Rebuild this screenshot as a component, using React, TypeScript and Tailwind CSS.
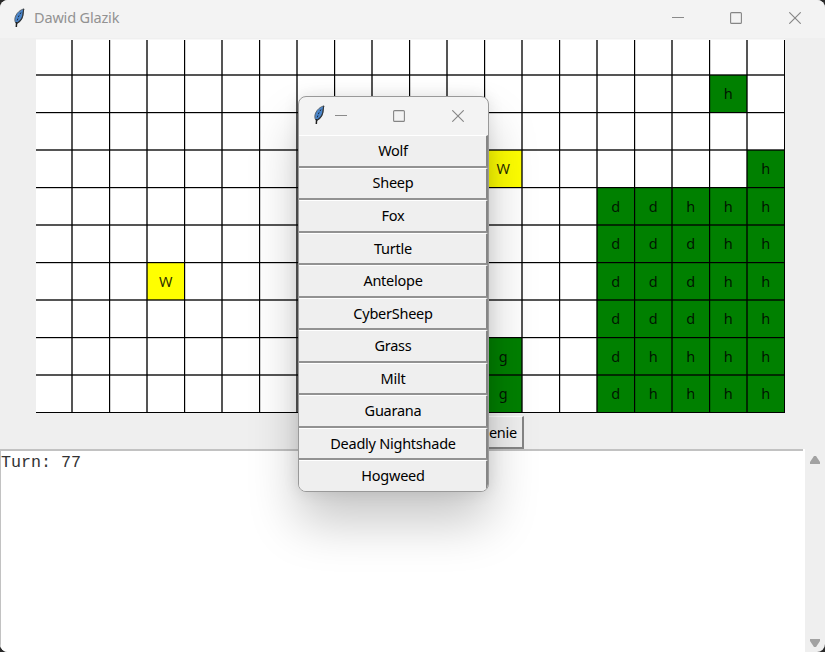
import React from "react";

const organisms: Record<string, string> = {
  "1,18": "h", "3,12": "W", "3,19": "h", "6,3": "W", "8,12": "g", "9,12": "g",
};
["ddhhh", "dddhh", "dddhh", "dddhh", "dhhhh", "dhhhh"].forEach((row, r) =>
  row.split("").forEach((c, i) => { organisms[`${r + 4},${i + 15}`] = c; })
);

const species = ["Wolf", "Sheep", "Fox", "Turtle", "Antelope", "CyberSheep", "Grass", "Milt", "Guarana", "Deadly Nightshade", "Hogweed"];

function Feather({ className }: { className: string }) {
  return (
    <svg className={className} width="12" height="20" viewBox="0 0 12 20">
      <path d="M10.8.9C7.5 1.6 4.2 4.4 2.6 8c-1.1 2.8-1 5 .1 7L3.8 15.4C6.8 13.6 8.9 11.2 9.7 8c.7-2.6.3-4.4 1.1-7.1Z" fill="#4a86cc" stroke="#555c63" strokeWidth=".9" />
      <path d="M10.8.9C10 3.5 10.4 5.5 9.7 8c-.8 3.2-2.9 5.6-5.9 7.4" fill="none" stroke="#30363c" strokeWidth="1.1" />
      <path d="M8 4.5 5.8 8 4.2 12.5" fill="none" stroke="#1b2a3c" strokeWidth="1" strokeDasharray="2 1.4" />
      <path d="M3.6 14 3.3 19" stroke="#202020" strokeWidth="1.5" />
    </svg>
  );
}

function Controls() {
  return (
    <div className="flex items-center">
      <svg width="12" height="12" viewBox="0 0 12 12"><path d="M0 5.5H12" stroke="#8a8a8a" /></svg>
      <svg className="ml-[46px] mr-[47px]" width="12" height="12" viewBox="0 0 12 12"><rect x=".6" y=".6" width="10.8" height="10.8" rx="1" fill="none" stroke="#858585" strokeWidth="1.1" /></svg>
      <svg width="12" height="12" viewBox="0 0 12 12"><path d="M.3.3 11.7 11.7M11.7.3.3 11.7" stroke="#858585" strokeWidth="1.1" /></svg>
    </div>
  );
}

function Board() {
  return (
    <div className="relative ml-9 mt-px h-[374px] w-[749px] shrink-0 overflow-hidden bg-white">
      <div className="-ml-[1.5px] -mt-[1.5px] grid w-[750px] grid-cols-[repeat(20,37.5px)] grid-rows-[repeat(10,37.5px)]">
        {Array.from({ length: 200 }, (_, i) => {
          const c = organisms[`${Math.floor(i / 20)},${i % 20}`];
          const color = !c ? "" : c === "W" ? "bg-[#ffff00]" : "bg-[#008000]";
          return <div key={i} className={"flex items-center justify-center pt-[1px] text-[14.5px] text-black/85 " + color}>{c}</div>;
        })}
      </div>
      <div className="absolute inset-0 bg-[repeating-linear-gradient(90deg,transparent_0_35px,#000000aa_35px_37px,transparent_37px_73px,#000_73px_74px,#00000030_74px_75px)]" />
      <div className="absolute inset-0 bg-[repeating-linear-gradient(180deg,transparent_0_35px,#000000aa_35px_37px,transparent_37px_73px,#000_73px_74px,#00000030_74px_75px)]" />
      <div className="absolute inset-x-0 top-0 h-px bg-[#f8f8f8]" />
    </div>
  );
}

export default function App() {
  return (
    <div className="h-[652px] w-[825px] overflow-hidden bg-[#292929] font-['Noto_Sans','Open_Sans',sans-serif]">
      <div className="relative flex h-full flex-col overflow-hidden rounded-[8px] bg-[#efefef]">
        <header className="flex h-[38px] shrink-0 items-center bg-[#f3f3f3] pl-[13px] pr-6">
          <Feather className="-mt-[3px]" />
          <span className="-mt-[3px] ml-[9px] flex-1 text-[14.5px] tracking-[-0.17px] text-[#929292]">Dawid Glazik</span>
          <div className="-mt-[3px]"><Controls /></div>
        </header>
        <Board />
        <div className="flex h-[36px] shrink-0 justify-end pr-[301px] pt-[3px]">
          <div className="flex h-[33px] w-[160px] items-center justify-end border-b-2 border-r-2 border-t border-[#858585] border-t-white pr-[5px] pt-[2px] text-[14.5px] tracking-[-0.25px] text-black">enie</div>
        </div>
        <div className="flex min-h-0 flex-1">
          <div className="w-[805px] border-r-2 border-r-white bg-white">
            <div className="h-full border-l border-t-2 border-[#c2c2c2] pt-[2px] font-['Liberation_Mono',monospace] text-[16.7px] leading-5 text-[#333]">Turn: 77</div>
          </div>
          <div className="flex flex-1 flex-col items-center justify-between pb-[5px] pt-[7px]">
            <svg width="10" height="8"><path d="M4 0H6L10 6V8H0V6Z" fill="#a2a2a2" /></svg>
            <svg width="10" height="8"><path d="M0 0H10V2L6 8H4L0 2Z" fill="#a2a2a2" /></svg>
          </div>
        </div>
        <div className="absolute left-[298px] top-[96px] flex h-[396px] w-[191px] flex-col overflow-hidden rounded-[8px] border border-[#999] bg-[#f3f3f3] shadow-[0_30px_50px_#00000038,0_0_16px_#0000001a]">
          <div className="flex h-[38px] shrink-0 items-center pl-[14px]">
            <Feather className="-mt-[3px]" />
            <div className="ml-[10px]"><Controls /></div>
          </div>
          {species.map((name) => (
            <div key={name} className="flex h-[32.55px] shrink-0 items-center justify-center border-b-2 border-r-2 border-t border-b-[#929292] border-r-[#858585] border-t-white bg-[#efefef] pl-[1px] text-[14.5px] tracking-[-0.25px] text-black">{name}</div>
          ))}
        </div>
      </div>
    </div>
  );
}
